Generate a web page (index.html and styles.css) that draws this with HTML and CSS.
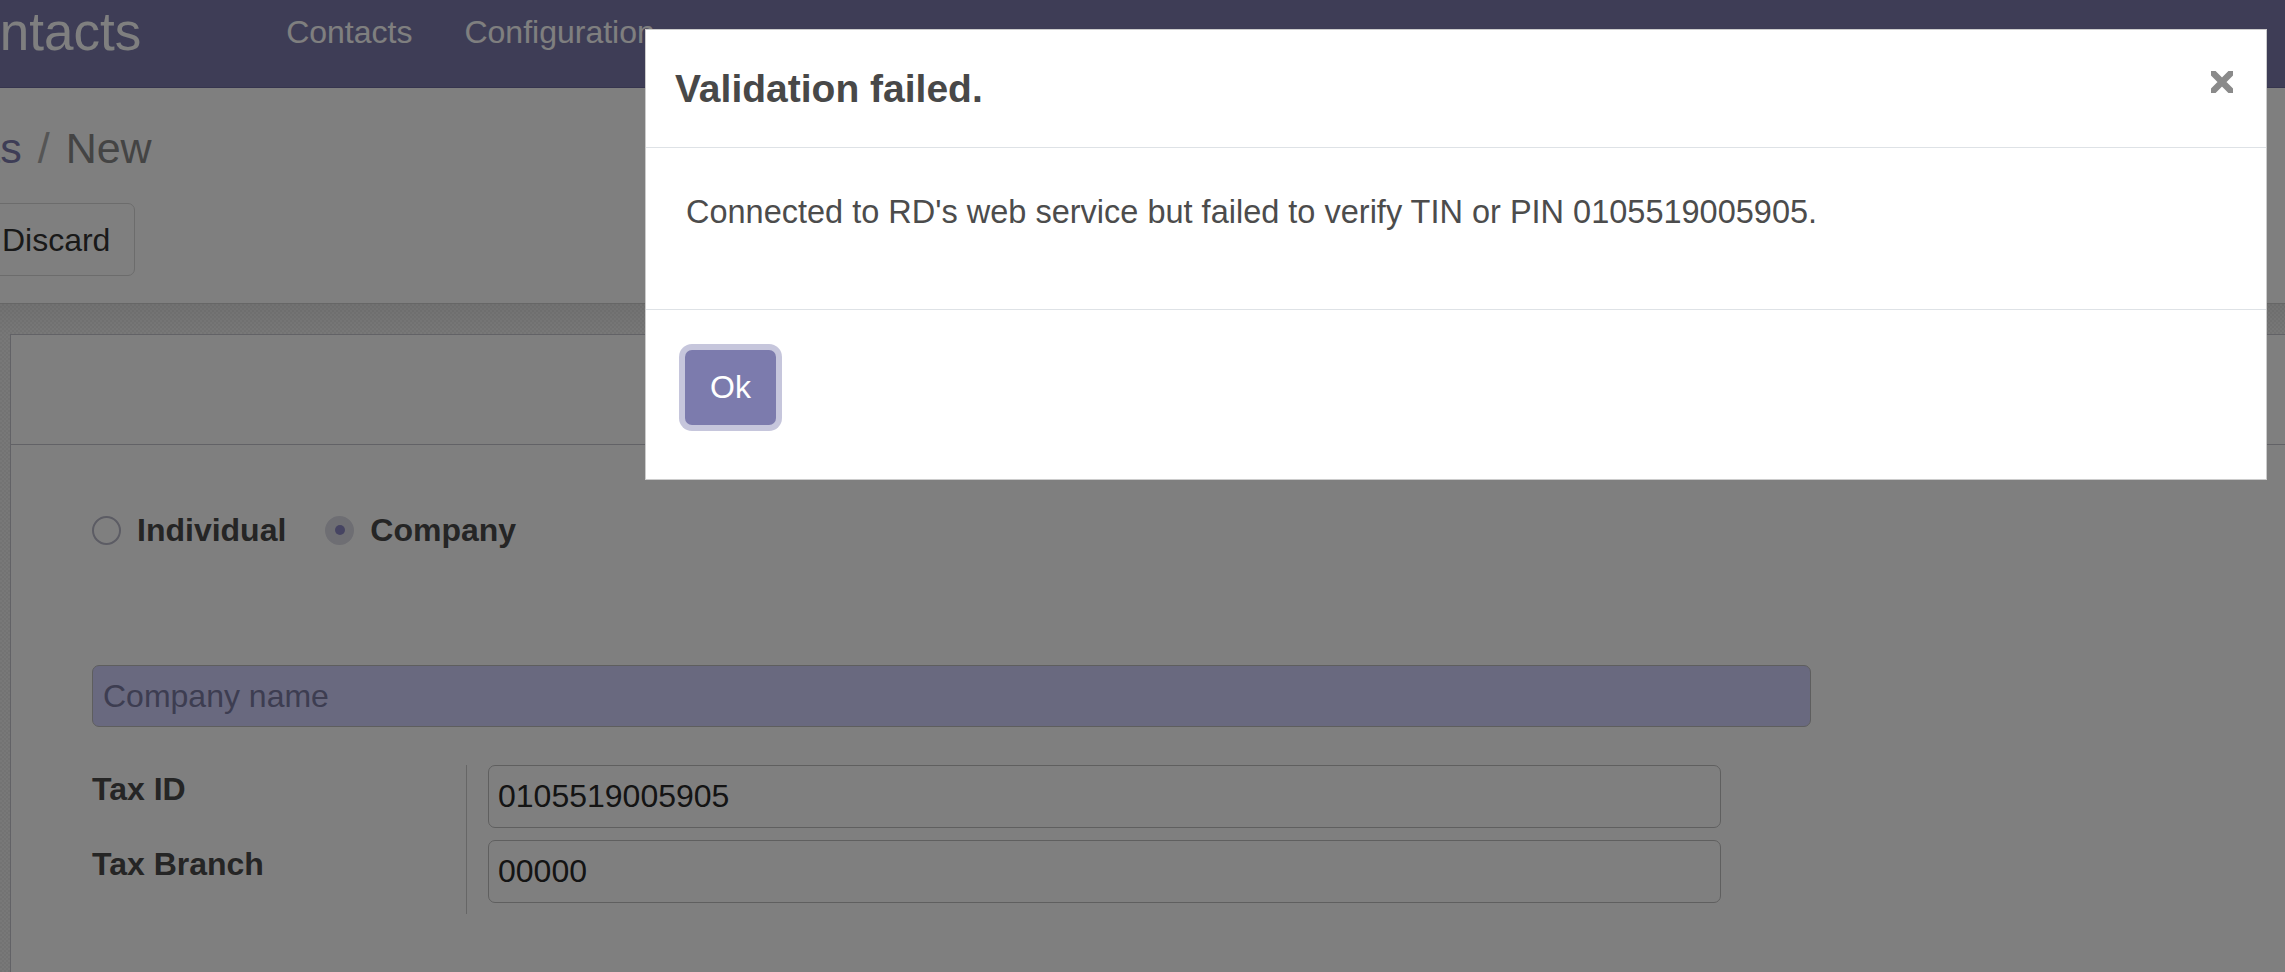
FILE: index.html
```html
<!DOCTYPE html>
<html lang="en">
<head>
<meta charset="utf-8">
<title>Contacts - New</title>
<link rel="stylesheet" href="styles.css">
</head>
<body>
  <header class="navbar">
    <a class="brand">Contacts</a>
    <nav class="menu">
      <a class="menu-item">Contacts</a>
      <a class="menu-item">Configuration</a>
    </nav>
  </header>

  <main class="action">
    <div class="control-panel">
      <ol class="breadcrumb">
        <li class="crumb crumb-link">Contacts</li>
        <li class="crumb-sep">/</li>
        <li class="crumb crumb-active">New</li>
      </ol>
      <div class="buttons">
        <button class="btn btn-primary">Save</button>
        <button class="btn btn-secondary">Discard</button>
      </div>
    </div>

    <div class="form-bg">
      <div class="sheet">
        <div class="statusbar"></div>
        <div class="sheet-body">
          <div class="radio-row">
            <label class="radio"><span class="radio-dot"></span><span class="radio-label">Individual</span></label>
            <label class="radio checked"><span class="radio-dot"></span><span class="radio-label">Company</span></label>
          </div>
          <input class="field field-required name-field" type="text" placeholder="Company name">
          <div class="group">
            <div class="g-label first">Tax ID</div>
            <div class="g-value first"><input class="field" type="text" value="0105519005905"></div>
            <div class="g-label">Tax Branch</div>
            <div class="g-value last"><input class="field" type="text" value="00000"></div>
          </div>
        </div>
      </div>
    </div>
  </main>

  <div class="backdrop"></div>

  <div class="modal" role="dialog">
    <div class="modal-header">
      <h4 class="modal-title">Validation failed.</h4>
      <button class="close" aria-label="Close">
        <svg width="22" height="22" viewBox="0 0 22 22"><path d="M-3 -3 L25 25 M25 -3 L-3 25" stroke="#8a8a8a" stroke-width="6.5" fill="none"/></svg>
      </button>
    </div>
    <div class="modal-body">
      <p>Connected to RD's web service but failed to verify TIN or PIN 0105519005905.</p>
    </div>
    <div class="modal-footer">
      <button class="btn-ok">Ok</button>
    </div>
  </div>
</body>
</html>
```

FILE: styles.css
```css
* { box-sizing: border-box; }

html, body {
  margin: 0;
  padding: 0;
}

body {
  width: 2285px;
  height: 972px;
  overflow: hidden;
  background: #ffffff;
  font-family: "Liberation Sans", Arial, sans-serif;
  color: #4c4c4c;
}

/* ---------- navbar ---------- */
.navbar {
  height: 88px;
  background: #7c7bad;
  border-bottom: 1px solid #6c6b9c;
  display: flex;
  align-items: flex-start;
  white-space: nowrap;
  color: #ffffff;
}

.brand {
  font-size: 53px;
  line-height: 60px;
  margin: 2px 0 0 -68px;
}

.menu {
  display: flex;
  gap: 52px;
  margin: 12px 0 0 145px;
  font-size: 32px;
  line-height: 40px;
}

/* ---------- control panel ---------- */
.control-panel {
  margin-left: -148px;
  padding: 35px 0 27px;
  border-bottom: 1px solid #cccccc;
  white-space: nowrap;
}

.breadcrumb {
  display: flex;
  margin: 0;
  padding: 0;
  list-style: none;
  font-size: 43px;
  line-height: 50px;
}

.crumb-link { color: #7c7bad; }
.crumb-sep { color: #aaaaaa; padding: 0 16px; }
.crumb-active { color: #888888; }

.buttons {
  display: flex;
  gap: 2px;
  margin-top: 30px;
}

.btn {
  font-family: inherit;
  font-size: 32px;
  line-height: 48px;
  padding: 12px 24px 11px;
  border: 1px solid #d8d8d8;
  border-radius: 7px;
  background: transparent;
}

.btn-primary {
  background: #7c7bad;
  border-color: #7c7bad;
  color: #ffffff;
}

.btn-secondary {
  color: #333333;
}

/* ---------- form ---------- */
.form-bg {
  padding: 30px 0 0 10px;
  background:
    linear-gradient(rgba(0,0,0,0.05), rgba(0,0,0,0) 30px),
    repeating-conic-gradient(#e6e6e6 0 25%, #f0f0f0 0 50%);
  background-size: auto, 4px 4px;
  height: 700px;
}

.sheet {
  background: #ffffff;
  border: 1px solid #c4c4cc;
  border-right: none;
  margin-right: -60px;
  height: 100%;
}

.statusbar {
  height: 110px;
  border-bottom: 1px solid #c4c4cc;
}

.sheet-body {
  padding: 65px 0 0 81px;
}

.radio-row {
  display: flex;
  align-items: center;
  height: 40px;
  gap: 39px;
}

.radio {
  display: flex;
  align-items: center;
  gap: 16px;
}

.radio-dot {
  width: 29px;
  height: 29px;
  border-radius: 50%;
  border: 2px solid #b8b8c8;
  display: flex;
  align-items: center;
  justify-content: center;
}

.radio.checked .radio-dot {
  background: #dcdce6;
  border-color: #dcdce6;
}

.radio.checked .radio-dot::after {
  content: "";
  width: 10px;
  height: 10px;
  border-radius: 50%;
  background: #8c89c4;
}

.radio-label {
  font-size: 32px;
  font-weight: bold;
  line-height: 40px;
  color: #4a4a4a;
}

.field {
  display: block;
  height: 63px;
  font-family: inherit;
  font-size: 32px;
  color: #282828;
  background: transparent;
  border: 1px solid #bebebe;
  border-radius: 7px;
  padding: 0 9px;
  outline: none;
}

.name-field {
  width: 1719px;
  height: 62px;
  margin-top: 115px;
  background: #d2d2ff;
  border-color: #bcbcbc;
  padding-left: 10px;
}

.name-field::placeholder {
  color: #7a7aa2;
}

.group {
  display: grid;
  grid-template-columns: 374px 1254px;
  margin-top: 38px;
}

.g-label {
  font-size: 32px;
  font-weight: bold;
  line-height: 40px;
  padding-top: 4px;
  color: #4a4a4a;
}

.g-value {
  border-left: 1px solid #cccccc;
  padding-left: 21px;
}

.g-value.first { padding-bottom: 12px; }
.g-value.last { padding-bottom: 11px; }

.g-value .field { width: 1233px; }

/* ---------- modal ---------- */
.backdrop {
  position: fixed;
  inset: 0;
  background: rgba(0, 0, 0, 0.5);
}

.modal {
  position: fixed;
  left: 645px;
  top: 29px;
  width: 1622px;
  background: #ffffff;
  border: 1px solid rgba(0, 0, 0, 0.2);
  display: flex;
  flex-direction: column;
}

.modal-header {
  height: 118px;
  border-bottom: 1px solid #dee2e6;
  display: flex;
  align-items: center;
  justify-content: space-between;
  padding: 0 33px 0 29px;
}

.modal-title {
  margin: 0;
  font-size: 39px;
  font-weight: bold;
  line-height: 46px;
  color: #484848;
}

.close {
  align-self: flex-start;
  margin-top: 41px;
  padding: 0;
  border: none;
  background: transparent;
  width: 22px;
  height: 22px;
  display: block;
}

.close svg { display: block; overflow: hidden; }

.modal-body {
  height: 161px;
  padding: 40px 40px 0;
}

.modal-body p {
  margin: 0;
  font-size: 32.5px;
  line-height: 48px;
  color: #4c4c4c;
}

.modal-footer {
  border-top: 1px solid #dee2e6;
  padding: 40px 39px 54px;
  display: flex;
}

.btn-ok {
  height: 75px;
  padding: 0 25px;
  font-family: inherit;
  font-size: 32px;
  color: #ffffff;
  background: #7c7bad;
  border: none;
  border-radius: 7px;
  box-shadow: 0 0 0 6px #c6c6dc;
}
```
